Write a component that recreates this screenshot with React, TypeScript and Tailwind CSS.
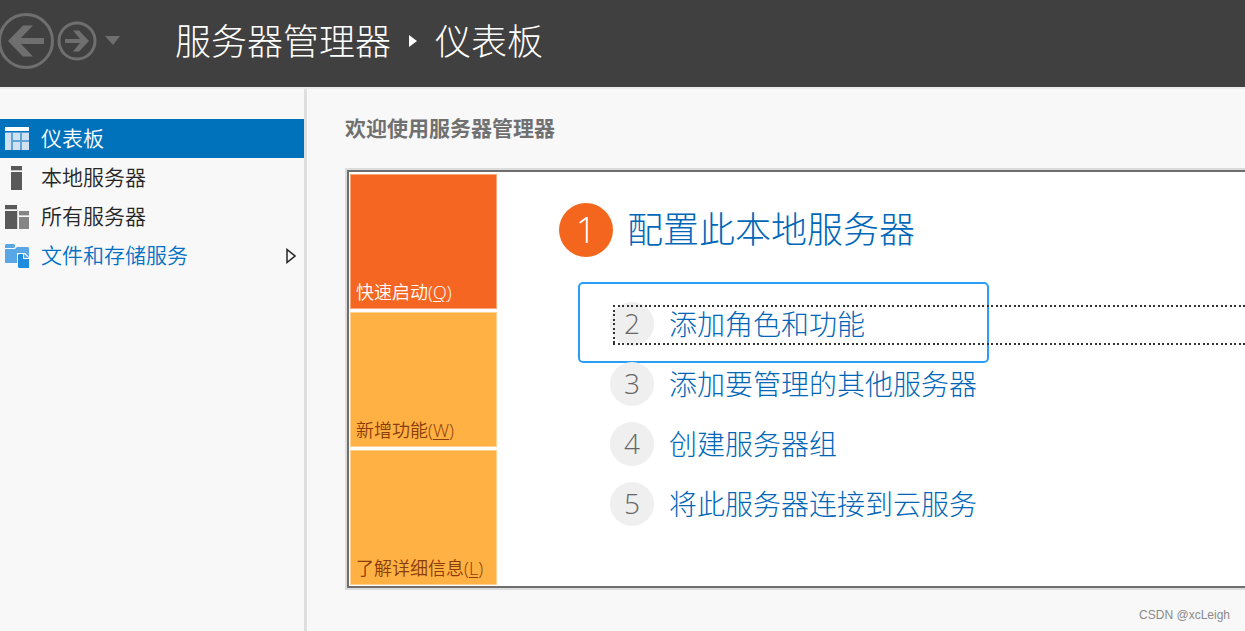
import type { ReactNode } from 'react'
import { clsx } from 'clsx'

function DashboardIcon() {
  return (
    <svg width="24" height="24" viewBox="0 0 24 24" aria-hidden="true">
      <path fill="#fff" d="M0 0h24v4H0z" />
      <path fill="#5fa3d8" d="M0 5h24v18H0z" />
      <path fill="#cfe1f3" d="M0 6h6v17H0zM8 6h7v7H8zM17 6h7v7h-7zM8 15h7v8H8zM17 15h7v8h-7z" />
    </svg>
  )
}

function ServerIcon() {
  return (
    <svg width="24" height="24" viewBox="0 0 24 24" aria-hidden="true">
      <path fill="#595959" d="M6 0h11v4H6zM6 6h11v18H6z" />
      <path fill="#c4c4c4" d="M6 4h11v1H6z" />
    </svg>
  )
}

function ServersIcon() {
  return (
    <svg width="24" height="24" viewBox="0 0 24 24" aria-hidden="true">
      <path fill="#d0d0d0" d="M0 4h12v1H0zM12 5h1v19h-1zM14 10h10v1H14z" />
      <path fill="#595959" d="M0 0h12v4H0zM0 6h12v18H0z" />
      <path fill="#858585" d="M14 6h10v4H14zM14 12h10v12H14z" />
    </svg>
  )
}

function StorageIcon() {
  return (
    <svg width="24" height="24" viewBox="0 0 24 24" aria-hidden="true">
      <path fill="#5aa7e6" d="M0 1l1-1h8l1 1v2l-1 1H0zM0 5h10l2-2h11l1 1v9l-4-4h-8v10H0z" />
      <path fill="#f8f8f8" d="M12 9h8l4 5v10H12z" />
      <path fill="#1f8ddd" d="M13 11l1-1h4v5h6v9H14l-1-1z" />
      <path fill="#5aa7e6" d="M19 10l5 4h-5z" />
    </svg>
  )
}

type NavItem = { label: string; icon: ReactNode; active?: boolean; link?: boolean }

const navItems: NavItem[] = [
  { label: '仪表板', icon: <DashboardIcon />, active: true },
  { label: '本地服务器', icon: <ServerIcon /> },
  { label: '所有服务器', icon: <ServersIcon /> },
  { label: '文件和存储服务', icon: <StorageIcon />, link: true },
]

const tiles = [
  { label: '快速启动', accessKey: 'Q', active: true },
  { label: '新增功能', accessKey: 'W' },
  { label: '了解详细信息', accessKey: 'L' },
]

const steps = ['添加角色和功能', '添加要管理的其他服务器', '创建服务器组', '将此服务器连接到云服务']

function Header() {
  return (
    <header className="flex h-[87px] items-center bg-[#404040] pb-1 text-white">
      <div className="flex w-[175px] shrink-0 items-center">
        <button type="button" aria-label="后退" className="-ml-px">
          <svg width="56" height="58" viewBox="0 0 56 58" fill="none" stroke="#6f6f6f">
            <circle cx="27" cy="28" r="26.500" strokeWidth="3" />
            <path fill="#6f6f6f" stroke="none" d="M9 28 24 12.500h10L22 25h23v6H22l12 12.500H24z" />
          </svg>
        </button>
        <button type="button" aria-label="前进" className="ml-[2px]">
          <svg width="40" height="42" viewBox="0 0 40 42" fill="none" stroke="#6f6f6f">
            <circle cx="20" cy="20" r="18" strokeWidth="3" />
            <path fill="#6f6f6f" stroke="none" d="M32 20 22 9.500h-6l7 8.500H8v4h15l-7 8.500h6z" />
          </svg>
        </button>
        <button type="button" aria-label="历史记录" className="ml-2">
          <svg width="16" height="12" viewBox="0 0 16 12" fill="#6f6f6f">
            <path d="M0 0h15L8 9z" />
          </svg>
        </button>
      </div>
      <h1 className="flex items-center text-4xl font-light whitespace-nowrap">
        服务器管理器
        <svg className="mx-[18px]" width="8" height="14" viewBox="0 0 8 14" fill="#fff" aria-hidden="true">
          <path d="M0 0l8 6-8 6z" />
        </svg>
        仪表板
      </h1>
    </header>
  )
}

function Sidebar() {
  return (
    <nav className="w-[307px] shrink-0 border-r-[3px] border-[#dfdfdf] pt-[30px]">
      <ul>
        {navItems.map(({ label, icon, active, link }) => (
          <li key={label}>
            <a
              href="#"
              className={clsx(
                'flex h-[39px] items-center pr-2 pl-[5px] text-[21px] font-[350]',
                active && 'bg-[#0072bc] text-white',
                link && 'text-[#0072c6]',
                !active && !link && 'text-[#262626]'
              )}
            >
              {icon}
              <span className="ml-3 flex-1">{label}</span>
              {link && (
                <svg width="10" height="16" viewBox="0 0 10 16" fill="none" stroke="#262626" strokeWidth="1.500" aria-hidden="true">
                  <path d="M1 1.500v13L9 8z" />
                </svg>
              )}
            </a>
          </li>
        ))}
      </ul>
    </nav>
  )
}

function Tiles() {
  return (
    <div className="flex w-[147px] shrink-0 flex-col gap-[3px]">
      {tiles.map(({ label, accessKey, active }) => (
        <button
          key={label}
          type="button"
          className={clsx(
            'flex h-[135px] items-end border px-[5px] pb-[3px] text-lg leading-[26px] font-[350] whitespace-nowrap',
            active ? 'border-[#f9a779] bg-[#f46621] text-white' : 'border-[#ffd292] bg-[#ffb143] text-[#8a3c0a]'
          )}
        >
          <span>
            {label}(<u className="underline-offset-2">{accessKey}</u>)
          </span>
        </button>
      ))}
    </div>
  )
}

// dotted keyboard-focus rectangle, open on the right where the row runs off the window
function FocusRect() {
  return (
    <span className="pointer-events-none absolute top-[3px] right-0 bottom-[1px] left-[3px]">
      <span className="absolute inset-x-0 top-0 h-[2px] bg-[repeating-linear-gradient(90deg,#333_0_2px,transparent_2px_5px,#333_5px_7px,transparent_7px_9px)]" />
      <span className="absolute inset-x-0 bottom-0 h-[2px] bg-[repeating-linear-gradient(90deg,#333_0_2px,transparent_2px_5px,#333_5px_7px,transparent_7px_9px)]" />
      <span className="absolute inset-y-0 left-0 w-[2px] bg-[repeating-linear-gradient(180deg,#333_0_2px,transparent_2px_5px,#333_5px_7px,transparent_7px_9px)]" />
    </span>
  )
}

function Steps() {
  return (
    <div className="min-w-0 flex-1 pt-[29px] pl-[62px]">
      <a href="#" className="flex items-center gap-[14px] text-4xl font-light text-[#0067b8]">
        <span className="flex size-[54px] shrink-0 items-center justify-center rounded-full bg-[#f4661e] text-white">1</span>
        配置此本地服务器
      </a>
      <ol className="mt-[45px] ml-[51px] flex flex-col gap-4">
        {steps.map((step, i) => (
          <li key={step} className="relative">
            <a href="#" className="flex h-11 items-center gap-[15px] text-[28px] font-light text-[#0067b8]">
              <span className="flex size-11 shrink-0 items-center justify-center rounded-full bg-[#efefef] pb-[2px] text-[#666]">
                {i + 2}
              </span>
              {step}
            </a>
            {i === 0 && (
              <>
                <span className="pointer-events-none absolute -top-5 -left-8 h-[81px] w-[411px] rounded-[5px] border-2 border-[#2b9df4]" />
                <FocusRect />
              </>
            )}
          </li>
        ))}
      </ol>
    </div>
  )
}

export default function App() {
  return (
    <div className="flex min-h-screen flex-col overflow-hidden bg-[#f8f8f8] font-['Open_Sans','Noto_Sans_CJK_SC',sans-serif]">
      <Header />
      <div className="flex flex-1 border-t-2 border-[#ececec]">
        <Sidebar />
        <main className="flex min-w-0 flex-1 flex-col pt-[23px] pl-[38px]">
          <h2 className="text-[21px] leading-8 font-bold text-[#707070]">欢迎使用服务器管理器</h2>
          <section className="mt-6 border-2 border-r-0 border-[#dcdcdc]">
            <div className="flex border-2 border-r-0 border-[#6e6e6e] bg-white pt-[2px] pb-px pl-px">
              <Tiles />
              <Steps />
            </div>
          </section>
          <footer className="mt-auto pr-[15px] pb-2 text-right font-['Liberation_Sans',sans-serif] text-xs leading-4 text-[#8a8a8a]">
            CSDN @xcLeigh
          </footer>
        </main>
      </div>
    </div>
  )
}
